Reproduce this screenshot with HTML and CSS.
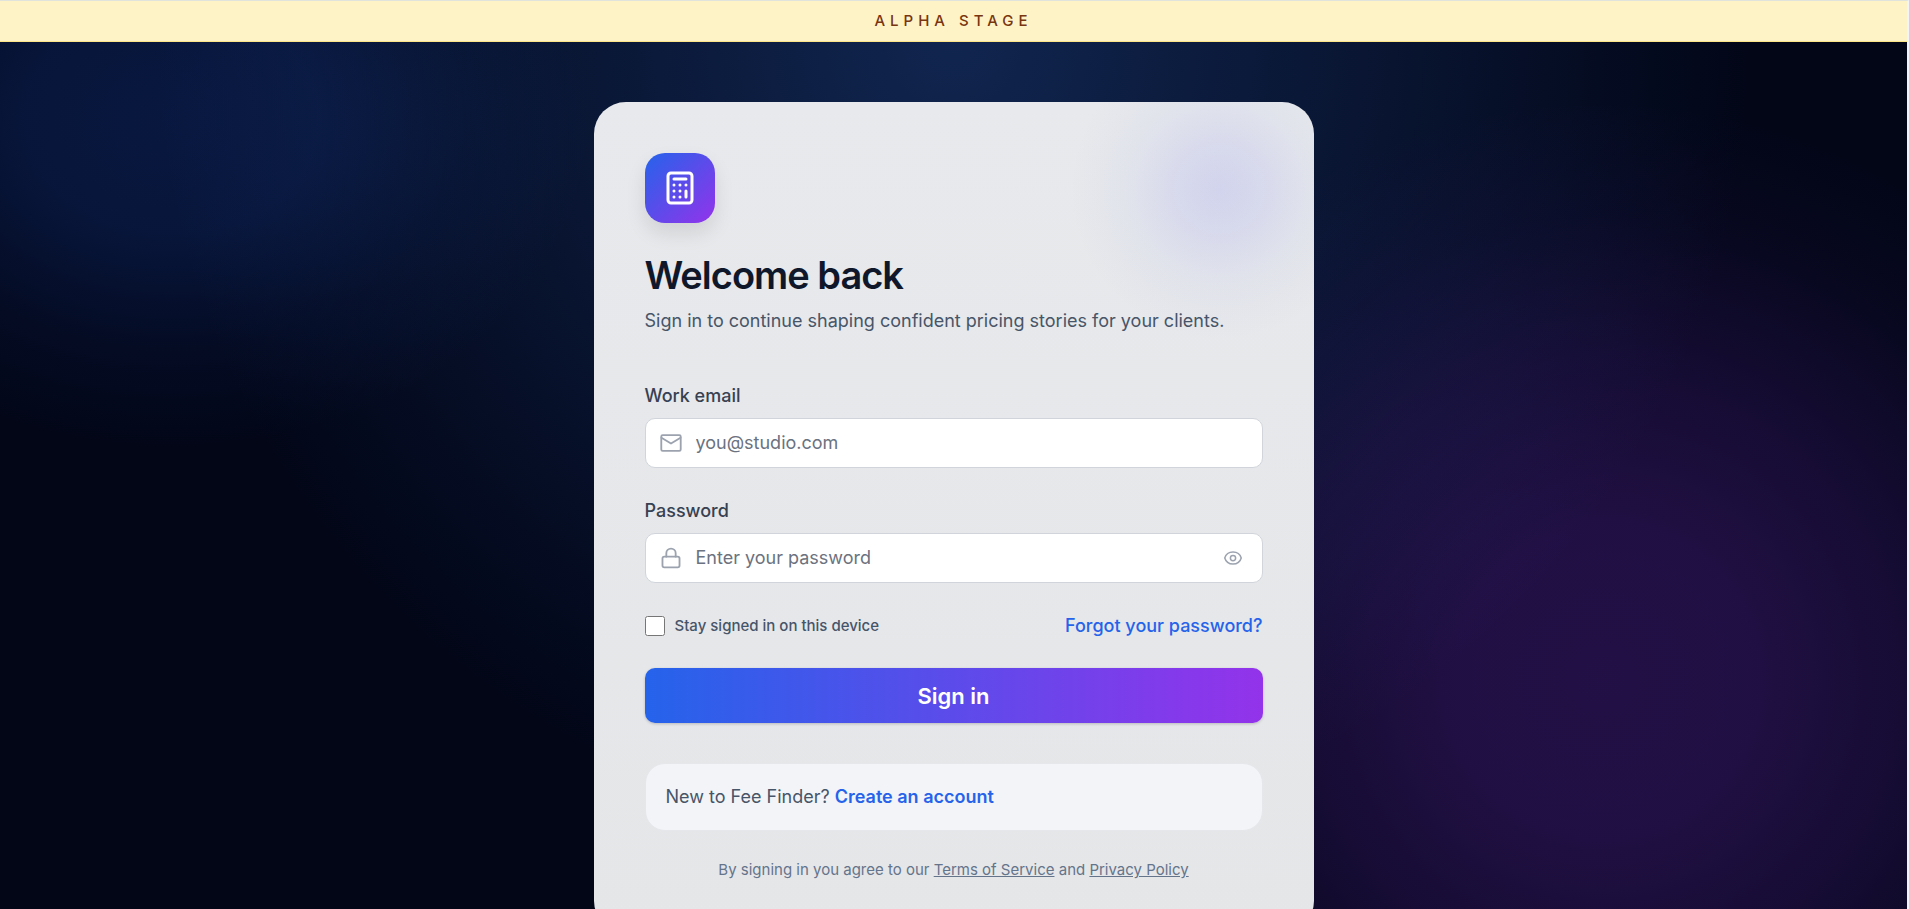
FILE: index.html
```html
<!DOCTYPE html>
<html lang="en">
<head>
    <meta charset="UTF-8">
    <meta name="viewport" content="width=device-width, initial-scale=1.0">
    <title>Sign in - Fee Finder</title>
    <link rel="stylesheet" href="styles.css">
</head>
<body>
    <div class="stage-banner">Alpha stage</div>
    <main class="login-page">
        <div class="login-card">
            <div class="logo">
                <svg viewBox="0 0 24 24" fill="none" stroke="currentColor" stroke-width="2" stroke-linecap="round" stroke-linejoin="round" aria-hidden="true">
                    <rect x="4" y="2" width="16" height="20" rx="2"/>
                    <path d="M8 6h8M8 10h.01M12 10h.01M16 10h.01M8 14h.01M12 14h.01M16 14v4M8 18h.01M12 18h.01"/>
                </svg>
            </div>
            <h1>Welcome back</h1>
            <p class="subtitle">Sign in to continue shaping confident pricing stories for your clients.</p>

            <form class="login-form">
                <div class="field">
                    <label for="email">Work email</label>
                    <div class="input-box">
                        <svg class="field-icon" viewBox="0 0 24 24" fill="none" stroke="currentColor" stroke-width="2" stroke-linecap="round" stroke-linejoin="round" aria-hidden="true">
                            <rect x="1.4" y="3.4" width="21.2" height="17.2" rx="1.5"/>
                            <path d="M1.6 6.2 12 12.6l10.4-6.4"/>
                        </svg>
                        <input type="email" id="email" placeholder="you@studio.com">
                    </div>
                </div>
                <div class="field">
                    <label for="password">Password</label>
                    <div class="input-box">
                        <svg class="field-icon" viewBox="0 0 24 24" fill="none" stroke="currentColor" stroke-width="2" stroke-linecap="round" stroke-linejoin="round" aria-hidden="true">
                            <rect x="2.7" y="10.5" width="18.6" height="11.7" rx="2"/>
                            <path d="M6.9 10.5V6.8a5.1 5.1 0 0 1 10.2 0v3.7"/>
                        </svg>
                        <input type="password" id="password" placeholder="Enter your password">
                        <button type="button" class="show-password" aria-label="Show password">
                            <svg viewBox="0 0 24 24" fill="none" stroke="currentColor" stroke-width="2" stroke-linecap="round" stroke-linejoin="round" aria-hidden="true">
                                <path d="M1 12C2.5 7 7 4 12 4s9.5 3 11 8C21.5 17 17 20 12 20S2.5 17 1 12z"/>
                                <circle cx="12" cy="12" r="3.5"/>
                            </svg>
                        </button>
                    </div>
                </div>
                <div class="options">
                    <label class="remember"><input type="checkbox"> Stay signed in on this device</label>
                    <a href="#">Forgot your password?</a>
                </div>
                <button type="submit" class="submit-button">Sign in</button>
            </form>

            <div class="signup">New to Fee Finder? <a href="#">Create an account</a></div>
            <p class="terms">By signing in you agree to our <a href="#">Terms of Service</a> and <a href="#">Privacy Policy</a></p>
        </div>
    </main>
</body>
</html>
```
FILE: styles.css
```css
* {
    box-sizing: border-box;
}
body {
    margin: 0;
    border-top: 1px solid #dfe3dc;
    border-right: 2px solid #f1f5f9;
    background: #f1f5f9;
    font-family: Inter, sans-serif;
    font-size: 18px;
    line-height: 26px;
    color: #475569;
}
a {
    color: #2563eb;
    font-weight: 500;
    text-decoration: none;
}
.stage-banner {
    padding: 8px;
    border-bottom: 1px solid #fde68a;
    background: #fef3c7;
    color: #78350f;
    font-size: 15px;
    font-weight: 500;
    line-height: 24px;
    letter-spacing: 5px;
    text-align: center;
    text-transform: uppercase;
}
.login-page {
    min-height: calc(100vh - 42px);
    padding: 60px 24px;
    background:
        radial-gradient(420px 330px at 9% 8%, rgba(37, 99, 235, 0.19), rgba(37, 99, 235, 0.17) 35%, rgba(37, 99, 235, 0.06) 70%, transparent),
        radial-gradient(580px 580px at 84% 67%, rgba(147, 51, 234, 0.22), rgba(147, 51, 234, 0.21) 25%, rgba(147, 51, 234, 0.13) 55%, rgba(147, 51, 234, 0.04) 80%, transparent),
        radial-gradient(circle at 50% 0, rgba(59, 130, 246, 0.25), transparent 800px),
        #020617;
}
.login-card {
    max-width: 720px;
    margin: 0 auto;
    padding: 51px;
    border-radius: 32px;
    background:
        radial-gradient(circle at 626px 88px, rgba(99, 102, 241, 0.16), rgba(99, 102, 241, 0.12) 40px, rgba(99, 102, 241, 0.04) 95px, transparent 150px),
        linear-gradient(#e7e9ec, #e5e6e8);
}
.logo {
    display: grid;
    place-items: center;
    width: 70px;
    height: 70px;
    border-radius: 20px;
    background: linear-gradient(135deg, #2563eb, #9333ea);
    box-shadow: 0 10px 20px rgba(0, 0, 0, 0.1);
    color: #fff;
}
.logo svg {
    width: 36px;
    height: 36px;
}
h1 {
    margin: 29px 0 0;
    color: #0f172a;
    font-size: 38px;
    font-weight: 600;
    line-height: 46px;
    letter-spacing: -1px;
}
.subtitle {
    margin: 10px 0 0;
}
.login-form {
    margin-top: 49px;
}
.field {
    margin-bottom: 30px;
}
.field label {
    display: block;
    margin-bottom: 9px;
    color: #374151;
    font-weight: 500;
}
.input-box {
    display: flex;
    align-items: center;
    gap: 14px;
    height: 50px;
    padding: 0 14px;
    border: 1px solid #d1d5db;
    border-radius: 10px;
    background: #fff;
    color: #9ca3af;
}
.input-box input {
    flex: 1;
    min-width: 0;
    padding: 0;
    border: 0;
    outline: none;
    background: transparent;
    color: #0f172a;
    font: inherit;
}
.input-box input::placeholder {
    color: #6b7280;
}
.field-icon {
    width: 22px;
    height: 22px;
}
.show-password {
    display: grid;
    padding: 6px;
    border: 0;
    background: transparent;
    color: #9ca3af;
    cursor: pointer;
}
.show-password svg {
    width: 18px;
    height: 18px;
}
.options {
    display: flex;
    align-items: center;
    justify-content: space-between;
}
.remember {
    display: flex;
    align-items: center;
    gap: 10px;
    font-size: 15px;
    font-weight: 500;
}
.remember input {
    width: 20px;
    height: 20px;
    margin: 0;
}
.submit-button {
    display: block;
    width: 100%;
    height: 55px;
    margin-top: 29px;
    border: 0;
    border-radius: 10px;
    background: linear-gradient(90deg, #2563eb, #9333ea);
    box-shadow: 0 1px 3px rgba(0, 0, 0, 0.2);
    color: #fff;
    font-family: inherit;
    font-size: 22px;
    font-weight: 600;
    cursor: pointer;
}
.signup {
    margin-top: 40px;
    padding: 20px;
    border: 1px solid #e5e7eb;
    border-radius: 20px;
    background: #f3f4f8;
}
.signup a {
    font-weight: 600;
}
.terms {
    margin: 27px 0 0;
    color: #64748b;
    font-size: 15px;
    line-height: 24px;
    text-align: center;
}
.terms a {
    color: inherit;
    font-weight: 400;
    text-decoration: underline;
}
```
